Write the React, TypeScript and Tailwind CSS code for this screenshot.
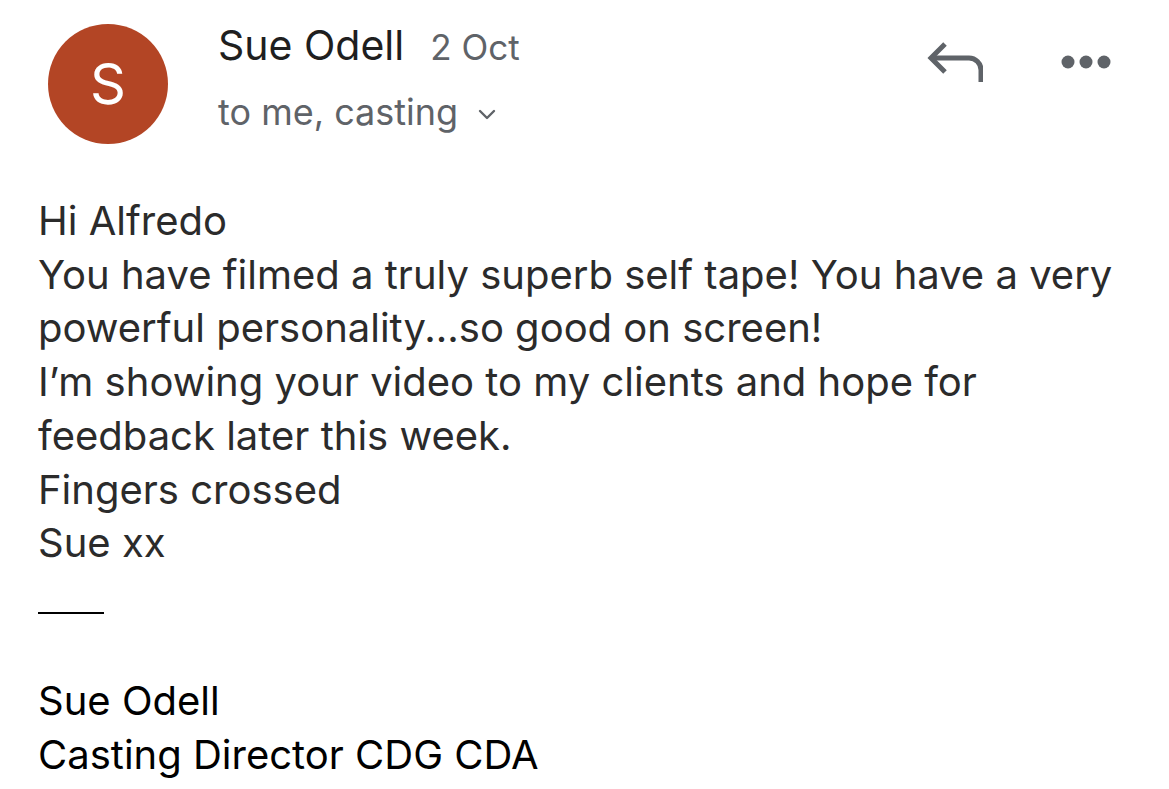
import React from "react";

export default function App() {
  return (
    <div className="w-[1169px] h-[789px] bg-white overflow-hidden" style={{ fontFamily: "Inter, 'Noto Sans', sans-serif" }}>
      <div className="flex items-start pl-[48px] pr-[58px] pt-[24px]">
        <div className="w-[120px] h-[120px] rounded-full bg-[#b34525] flex items-center justify-center text-white text-[56px] leading-none shrink-0">
          S
        </div>
        <div className="flex flex-col ml-[50px] mt-[0px] grow">
          <div className="flex items-baseline">
            <span className="text-[41px] text-[#1f1f1f] leading-[42px]">Sue Odell</span>
            <span className="text-[35px] text-[#5f6368] ml-[26px] leading-[42px]">2 Oct</span>
          </div>
          <div className="flex items-center mt-[24px]">
            <span className="text-[36px] text-[#5f6368] leading-[40px]">to me, casting</span>
            <svg className="ml-[20px] mt-[4px]" width="18" height="12" viewBox="0 0 18 12" fill="none">
              <path d="M2 3l7 7 7-7" stroke="#5f6368" strokeWidth="2.4" strokeLinecap="round" strokeLinejoin="round" />
            </svg>
          </div>
        </div>
        <div className="flex items-center gap-[78px] mt-[16px]">
          <svg width="56" height="44" viewBox="0 0 56 44" fill="none">
            <path d="M18 4L4 18l14 14" stroke="#5f6368" strokeWidth="5" strokeLinejoin="miter" />
            <path d="M5 18h37a12 12 0 0 1 12 12v12" stroke="#5f6368" strokeWidth="5" />
          </svg>
          <svg width="50" height="14" viewBox="0 0 50 14">
            <circle cx="7" cy="7" r="6.5" fill="#5f6368" />
            <circle cx="25" cy="7" r="6.5" fill="#5f6368" />
            <circle cx="43" cy="7" r="6.5" fill="#5f6368" />
          </svg>
        </div>
      </div>
      <div className="pl-[38px] mt-[50px] text-[40px] leading-[53.7px] text-[#2b2b2b]">
        <div>Hi Alfredo</div>
        <div>You have filmed a truly superb self tape! You have a very</div>
        <div>powerful personality...so good on screen!</div>
        <div>I’m showing your video to my clients and hope for</div>
        <div>feedback later this week.</div>
        <div>Fingers crossed</div>
        <div>Sue xx</div>
        <div className="w-[66px] h-[2px] bg-black mt-[42px]"></div>
        <div className="text-black mt-[60px]">Sue Odell</div>
        <div className="text-black">Casting Director CDG CDA</div>
      </div>
    </div>
  );
}
